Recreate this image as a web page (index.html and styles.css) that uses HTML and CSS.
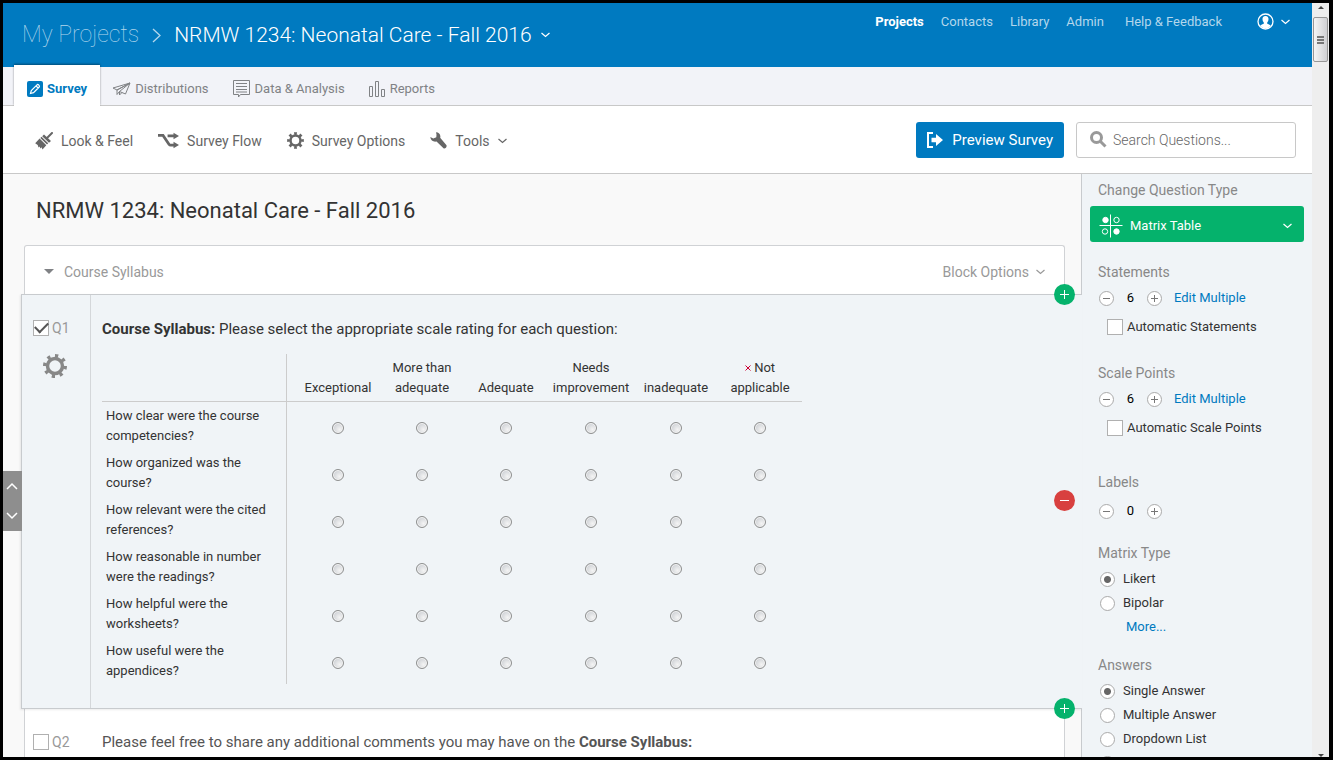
FILE: index.html
```html
<!DOCTYPE html>
<html lang="en">
<head>
    <meta charset="UTF-8">
    <title>NRMW 1234: Neonatal Care - Fall 2016</title>
    <link rel="stylesheet" href="styles.css">
</head>
<body>
    <div class="page">
        <header class="header">
            <div class="breadcrumb">
                <a href="#" class="crumb-root">My Projects</a>
                <svg class="crumb-arrow" width="9" height="15" viewBox="0 0 9 15"><path d="M1 1l7 6.500-7 6.500"/></svg>
                <button class="crumb-current">NRMW 1234: Neonatal Care - Fall 2016
                    <svg class="chevron" width="9" height="6" viewBox="0 0 9 6"><path d="M.5 1l4 3.500 4-3.500"/></svg>
                </button>
            </div>
            <nav class="main-nav">
                <a href="#" class="active">Projects</a>
                <a href="#">Contacts</a>
                <a href="#">Library</a>
                <a href="#">Admin</a>
                <a href="#" class="help">Help &amp; Feedback</a>
                <button class="account" aria-label="Account">
                    <svg width="17" height="17" viewBox="0 0 17 17">
                        <circle cx="8.500" cy="8.500" r="7.500" fill="none" stroke="#fff" stroke-width="1.300"/>
                        <path d="M8.500 3C6.300 3 5.400 4.500 5.500 6.300c.1 1.500.6 2.500 1.300 3.200v1.300c-1 .5-2.600.8-3.600 1.900A7.300 7.300 0 0 0 8.500 15.500a7.300 7.300 0 0 0 5.300-2.800c-1-1.100-2.600-1.400-3.600-1.900V9.500c.7-.7 1.200-1.700 1.300-3.200C11.600 4.500 10.700 3 8.500 3z" fill="#fff"/>
                    </svg>
                    <svg class="chevron" width="9" height="6" viewBox="0 0 9 6"><path d="M.5 1l4 3.500 4-3.500"/></svg>
                </button>
            </nav>
        </header>

        <nav class="tabs">
            <a href="#" class="tab active">
                <svg width="16" height="16" viewBox="0 0 16 16">
                    <rect width="16" height="16" rx="2" fill="#007ac0"/>
                    <path d="M3.500 12.500l.8-3 5.700-5.700c1-1 3.200 1.200 2.200 2.200l-5.700 5.700zM9 4.800L11.200 7" fill="none" stroke="#fff" stroke-width="1.200"/>
                </svg>
                Survey
            </a>
            <a href="#" class="tab">
                <svg width="19" height="16" viewBox="0 0 19 16" class="line-icon"><path d="M18 2L1 7l4 2zM18 2L5 9v4.500l2.500-3M18 2l-4.500 11-6-2.500zM7.500 10.500V14l2.500-2.500"/></svg>
                Distributions
            </a>
            <a href="#" class="tab">
                <svg width="18" height="18" viewBox="0 0 18 18" class="line-icon"><path d="M.5.5h16v14h-9L5.500 17v-2.500h-5zM3 3.500h11M3 6.500h11M3 9.500h11M3 12h11"/></svg>
                Data &amp; Analysis
            </a>
            <a href="#" class="tab">
                <svg width="17" height="16" viewBox="0 0 17 16" class="line-icon"><path d="M.5 5.500h3v10h-3zM6.500.5h3v15h-3zM12.500 8.500h3v7h-3z"/></svg>
                Reports
            </a>
        </nav>

        <div class="toolbar">
            <button class="tool">
                <svg width="18" height="18" viewBox="0 0 18 18">
                    <path d="M17 1L12.500 5.500" stroke="#666" stroke-width="2" stroke-linecap="round"/>
                    <path d="M9 2.500l7 6.500-2 1.800-6.800-6.500zM6.500 4.800l6.700 6.500-1.200 1.200L5.300 6zM4.600 6.600l6.700 6.600L7.500 17.500l-1-2.300-1 1.200-1-2-1 1-.8-2.300L.2 11.200z" fill="#666"/>
                </svg>
                Look &amp; Feel
            </button>
            <button class="tool">
                <svg width="21" height="17" viewBox="0 0 23 17">
                    <path d="M0 3h5.500l6.500 9.500c.5.700 1 1 2 1h4M10.500 3.500H18" fill="none" stroke="#666" stroke-width="3"/>
                    <path d="M17 0l6 3.500L17 7zM17 10l6 3.500-6 3.500z" fill="#666"/>
                </svg>
                Survey Flow
            </button>
            <button class="tool">
                <svg class="gear" width="17" height="17" viewBox="0 0 24 24">
                    <circle cx="12" cy="12" r="7" stroke-width="3.500"/>
                    <circle cx="12" cy="12" r="9.800" stroke-width="4" pathLength="16" stroke-dasharray="1 1" stroke-dashoffset=".5"/>
                </svg>
                Survey Options
            </button>
            <button class="tool">
                <svg width="17" height="17" viewBox="0 0 17 17"><path d="M6 .3c3 0 5 2.500 4.200 5.500l6.300 7.400c.6 1.800-1.300 3.800-3 3L6.500 9.500C3.500 10.200.6 8.300.3 5l3 1.500 3-1.300L6.500 2.600z" fill="#666"/></svg>
                Tools
                <svg class="chevron" width="9" height="6" viewBox="0 0 9 6"><path d="M.5 1l4 3.500 4-3.500"/></svg>
            </button>

            <button class="preview-btn">
                <svg width="17" height="16" viewBox="0 0 17 16"><path d="M6 1H1v14h5" fill="none" stroke="#fff" stroke-width="2"/><path d="M4.500 5.800H9V2l7 6-7 6v-3.800H4.500z" fill="#fff"/></svg>
                Preview Survey
            </button>
            <label class="search">
                <svg width="17" height="17" viewBox="0 0 17 17"><circle cx="6.500" cy="6.500" r="5" fill="none" stroke="#999" stroke-width="3"/><path d="M10.500 10.500l5 5" stroke="#999" stroke-width="3"/></svg>
                <input type="text" placeholder="Search Questions..." aria-label="Search Questions">
            </label>
        </div>

        <div class="content">
            <main class="editor">
                <div class="block-top">
                    <h1>NRMW 1234: Neonatal Care - Fall 2016</h1>
                    <div class="block-header">
                        <button class="block-name"><span class="caret"></span>Course Syllabus</button>
                        <button class="block-options">Block Options
                            <svg class="chevron" width="9" height="6" viewBox="0 0 9 6"><path d="M.5 1l4 3.500 4-3.500"/></svg>
                        </button>
                    </div>
                </div>

                <section class="question">
                    <div class="question-side">
                        <label class="question-id"><input type="checkbox" class="check" checked>Q1</label>
                        <button class="question-gear" aria-label="Question options">
                            <svg class="gear" width="24" height="24" viewBox="0 0 24 24">
                                <circle cx="12" cy="12" r="7.500" stroke-width="3.500"/>
                                <circle cx="12" cy="12" r="10" stroke-width="4" pathLength="16" stroke-dasharray=".8 1.200"/>
                            </svg>
                        </button>
                    </div>
                    <div class="question-body">
                        <p class="question-text"><b>Course Syllabus:</b> Please select the appropriate scale rating for each question:</p>
                        <table class="matrix">
                            <colgroup>
                                <col class="col-statement">
                                <col class="col-first">
                                <col span="2">
                                <col class="col-wide">
                                <col span="2">
                            </colgroup>
                            <thead>
                                <tr>
                                    <td></td>
                                    <th>Exceptional</th>
                                    <th>More than adequate</th>
                                    <th>Adequate</th>
                                    <th>Needs improvement</th>
                                    <th>inadequate</th>
                                    <th><svg class="exclusive" width="6" height="8" viewBox="0 0 6 8"><path d="M.5 1.500l5 5M5.500 1.500l-5 5"/></svg> Not applicable</th>
                                </tr>
                            </thead>
                            <tbody>
                                <tr>
                                    <th>How clear were the course competencies?</th>
                                    <td><input type="radio" name="s1" aria-label="Exceptional"></td>
                                    <td><input type="radio" name="s1" aria-label="More than adequate"></td>
                                    <td><input type="radio" name="s1" aria-label="Adequate"></td>
                                    <td><input type="radio" name="s1" aria-label="Needs improvement"></td>
                                    <td><input type="radio" name="s1" aria-label="inadequate"></td>
                                    <td><input type="radio" name="s1" aria-label="Not applicable"></td>
                                </tr>
                                <tr>
                                    <th>How organized was the course?</th>
                                    <td><input type="radio" name="s2" aria-label="Exceptional"></td>
                                    <td><input type="radio" name="s2" aria-label="More than adequate"></td>
                                    <td><input type="radio" name="s2" aria-label="Adequate"></td>
                                    <td><input type="radio" name="s2" aria-label="Needs improvement"></td>
                                    <td><input type="radio" name="s2" aria-label="inadequate"></td>
                                    <td><input type="radio" name="s2" aria-label="Not applicable"></td>
                                </tr>
                                <tr>
                                    <th>How relevant were the cited references?</th>
                                    <td><input type="radio" name="s3" aria-label="Exceptional"></td>
                                    <td><input type="radio" name="s3" aria-label="More than adequate"></td>
                                    <td><input type="radio" name="s3" aria-label="Adequate"></td>
                                    <td><input type="radio" name="s3" aria-label="Needs improvement"></td>
                                    <td><input type="radio" name="s3" aria-label="inadequate"></td>
                                    <td><input type="radio" name="s3" aria-label="Not applicable"></td>
                                </tr>
                                <tr>
                                    <th>How reasonable in number were the readings?</th>
                                    <td><input type="radio" name="s4" aria-label="Exceptional"></td>
                                    <td><input type="radio" name="s4" aria-label="More than adequate"></td>
                                    <td><input type="radio" name="s4" aria-label="Adequate"></td>
                                    <td><input type="radio" name="s4" aria-label="Needs improvement"></td>
                                    <td><input type="radio" name="s4" aria-label="inadequate"></td>
                                    <td><input type="radio" name="s4" aria-label="Not applicable"></td>
                                </tr>
                                <tr>
                                    <th>How helpful were the worksheets?</th>
                                    <td><input type="radio" name="s5" aria-label="Exceptional"></td>
                                    <td><input type="radio" name="s5" aria-label="More than adequate"></td>
                                    <td><input type="radio" name="s5" aria-label="Adequate"></td>
                                    <td><input type="radio" name="s5" aria-label="Needs improvement"></td>
                                    <td><input type="radio" name="s5" aria-label="inadequate"></td>
                                    <td><input type="radio" name="s5" aria-label="Not applicable"></td>
                                </tr>
                                <tr>
                                    <th>How useful were the appendices?</th>
                                    <td><input type="radio" name="s6" aria-label="Exceptional"></td>
                                    <td><input type="radio" name="s6" aria-label="More than adequate"></td>
                                    <td><input type="radio" name="s6" aria-label="Adequate"></td>
                                    <td><input type="radio" name="s6" aria-label="Needs improvement"></td>
                                    <td><input type="radio" name="s6" aria-label="inadequate"></td>
                                    <td><input type="radio" name="s6" aria-label="Not applicable"></td>
                                </tr>
                            </tbody>
                        </table>
                    </div>
                    <button class="round-btn add-above" aria-label="Add question above"><svg width="11" height="11" viewBox="0 0 11 11"><path d="M5.500 1v9M1 5.500h9"/></svg></button>
                    <button class="round-btn remove" aria-label="Remove question"><svg width="11" height="11" viewBox="0 0 11 11"><path d="M1 5.500h9"/></svg></button>
                    <button class="round-btn add-below" aria-label="Add question below"><svg width="11" height="11" viewBox="0 0 11 11"><path d="M5.500 1v9M1 5.500h9"/></svg></button>
                </section>

                <div class="block-rest">
                    <section class="question-next">
                        <label class="question-id"><input type="checkbox" class="check">Q2</label>
                        <p class="question-text">Please feel free to share any additional comments you may have on the <b>Course Syllabus:</b></p>
                    </section>
                </div>

                <div class="jump">
                    <button aria-label="Previous"><svg width="12" height="8" viewBox="0 0 12 8"><path d="M1 7l5-5 5 5"/></svg></button>
                    <button aria-label="Next"><svg width="12" height="8" viewBox="0 0 12 8"><path d="M1 1l5 5 5-5"/></svg></button>
                </div>
            </main>

            <aside class="panel">
                <div class="group">
                    <h2>Change Question Type</h2>
                    <button class="type-btn">
                        <svg width="24" height="24" viewBox="0 0 24 24" fill="none" stroke="#fff">
                            <path d="M11.500.5v23M.5 11.500h23"/>
                            <circle cx="6.500" cy="6" r="2.700" fill="#fff"/>
                            <circle cx="17.500" cy="6" r="2.700"/>
                            <circle cx="6" cy="17.500" r="2.700"/>
                            <circle cx="17.500" cy="17.500" r="2.700" fill="#fff"/>
                        </svg>
                        Matrix Table
                        <svg class="chevron" width="9" height="6" viewBox="0 0 9 6"><path d="M.5 1l4 3.500 4-3.500"/></svg>
                    </button>
                </div>

                <div class="group">
                    <h2>Statements</h2>
                    <div class="counter">
                        <button aria-label="Fewer statements"><svg width="9" height="9" viewBox="0 0 9 9"><path d="M1 4.500h7"/></svg></button>
                        <span>6</span>
                        <button aria-label="More statements"><svg width="9" height="9" viewBox="0 0 9 9"><path d="M1 4.500h7M4.500 1v7"/></svg></button>
                        <a href="#">Edit Multiple</a>
                    </div>
                    <label class="auto"><input type="checkbox" class="check">Automatic Statements</label>
                </div>

                <div class="group spaced">
                    <h2>Scale Points</h2>
                    <div class="counter">
                        <button aria-label="Fewer scale points"><svg width="9" height="9" viewBox="0 0 9 9"><path d="M1 4.500h7"/></svg></button>
                        <span>6</span>
                        <button aria-label="More scale points"><svg width="9" height="9" viewBox="0 0 9 9"><path d="M1 4.500h7M4.500 1v7"/></svg></button>
                        <a href="#">Edit Multiple</a>
                    </div>
                    <label class="auto"><input type="checkbox" class="check">Automatic Scale Points</label>
                </div>

                <div class="group labels">
                    <h2>Labels</h2>
                    <div class="counter">
                        <button aria-label="Fewer labels"><svg width="9" height="9" viewBox="0 0 9 9"><path d="M1 4.500h7"/></svg></button>
                        <span>0</span>
                        <button aria-label="More labels"><svg width="9" height="9" viewBox="0 0 9 9"><path d="M1 4.500h7M4.500 1v7"/></svg></button>
                    </div>
                </div>

                <div class="group">
                    <h2>Matrix Type</h2>
                    <label class="option"><input type="radio" name="matrix-type" checked>Likert</label>
                    <label class="option"><input type="radio" name="matrix-type">Bipolar</label>
                    <a href="#" class="more">More...</a>
                </div>

                <div class="group tight">
                    <h2>Answers</h2>
                    <label class="option"><input type="radio" name="answers" checked>Single Answer</label>
                    <label class="option"><input type="radio" name="answers">Multiple Answer</label>
                    <label class="option"><input type="radio" name="answers">Dropdown List</label>
                    <label class="option"><input type="radio" name="answers"></label>
                </div>
            </aside>
        </div>
    </div>

    <div class="scrollbar">
        <span class="arrow-up"></span>
        <div class="thumb"><i></i><i></i><i></i></div>
        <span class="arrow-down"></span>
    </div>
</body>
</html>
```
FILE: styles.css
```css
* {
    box-sizing: border-box;
}

body {
    margin: 0;
    height: 100vh;
    padding: 3px 4px 3px 3px;
    background: #000;
    display: flex;
    overflow: hidden;
    font-family: Roboto, "Liberation Sans", sans-serif;
    font-size: 13px;
    line-height: 20px;
    color: #333;
}

h1, h2, p {
    margin: 0;
    font-weight: 400;
}

a {
    color: #007ac0;
    text-decoration: none;
}

button {
    border: none;
    background: none;
    padding: 0;
    font: inherit;
    color: inherit;
    cursor: pointer;
    display: flex;
    align-items: center;
}

svg {
    flex-shrink: 0;
}

.chevron {
    fill: none;
    stroke: currentColor;
    stroke-width: 1.2;
}

.page {
    flex: 1;
    min-width: 0;
    display: flex;
    flex-direction: column;
    background: #fff;
}

/* Header */
.header {
    height: 64px;
    flex-shrink: 0;
    padding: 0 22px 0 19px;
    background: #007ac0;
    display: flex;
    justify-content: space-between;
}

.breadcrumb {
    display: flex;
    align-items: center;
    gap: 13px;
    font-size: 21px;
    font-weight: 300;
    color: #fff;
}

.crumb-root {
    color: #b3d7ec;
    font-size: 23px;
    font-weight: 100;
}

.crumb-arrow {
    fill: none;
    stroke: #b3d7ec;
    stroke-width: 1.3;
}

.crumb-current {
    gap: 9px;
}

.main-nav {
    height: 37px;
    display: flex;
    align-items: center;
    gap: 17px;
}

.main-nav a {
    color: #b3d7ec;
}

.main-nav a.active {
    color: #fff;
    font-weight: 700;
}

.main-nav .help {
    margin-left: 4px;
}

.account {
    gap: 7px;
    margin-left: 18px;
    color: #fff;
}

/* Tabs */
.tabs {
    height: 39px;
    flex-shrink: 0;
    padding: 0 11px;
    background: #f2f3f8;
    border-bottom: 1px solid #c8c8c8;
    display: flex;
}

.tab {
    height: 38px;
    padding: 6px 12px 0;
    display: flex;
    align-items: center;
    gap: 4px;
    color: #808285;
}

.tab.active {
    height: 41px;
    margin-top: -2px;
    padding: 6px 13px 0;
    background: #fff;
    color: #007ac0;
    font-weight: 700;
    box-shadow: 0 -1px 2px rgba(0, 0, 0, 0.4);
    clip-path: inset(-3px -2px 0 -2px);
}

.line-icon {
    fill: none;
    stroke: #808285;
}

/* Toolbar */
.toolbar {
    height: 68px;
    flex-shrink: 0;
    padding: 0 16px 0 32px;
    border-bottom: 1px solid #c8c8c8;
    display: flex;
    align-items: center;
    gap: 25px;
    font-size: 14px;
    color: #666;
}

.tool {
    padding-top: 2px;
    gap: 8px;
}

.gear {
    fill: none;
    stroke: #666;
}

.preview-btn {
    height: 36px;
    margin-left: auto;
    margin-right: -13px;
    padding: 0 11px;
    gap: 8px;
    border-radius: 3px;
    background: #007ac0;
    color: #fff;
    font-size: 15px;
}

.search {
    width: 220px;
    height: 36px;
    padding: 0 13px;
    border: 1px solid #c8c8c8;
    border-radius: 3px;
    display: flex;
    align-items: center;
    gap: 6px;
}

.search input {
    width: 100%;
    border: none;
    padding: 0;
    outline: none;
    background: none;
    font: inherit;
    font-weight: 300;
}

.search input::placeholder {
    color: #666;
}

/* Survey editor */
.content {
    flex: 1;
    min-height: 0;
    display: flex;
    overflow: hidden;
}

.editor {
    position: relative;
    flex: 1;
    min-width: 0;
    display: flex;
    flex-direction: column;
    background: #f9f9f9;
}

.block-top {
    padding: 21px 16px 0 21px;
    border-right: 1px solid #c8cbce;
}

h1 {
    padding-left: 12px;
    font-size: 22px;
    line-height: 32px;
    margin-bottom: 18px;
}

.block-header {
    height: 49px;
    padding: 3px 19px 0;
    border: 1px solid #d0d2d5;
    border-bottom: none;
    border-radius: 3px 3px 0 0;
    background: #fff;
    display: flex;
    justify-content: space-between;
    align-items: center;
    color: #999;
    font-size: 14px;
}

.caret {
    border: 5px solid transparent;
    border-top-color: #808285;
    border-bottom: none;
    margin-right: 10px;
}

.block-options {
    gap: 7px;
}

.question {
    position: relative;
    margin-left: 18px;
    height: 415px;
    flex-shrink: 0;
    display: flex;
    border: 1px solid #c8cbce;
    border-right: none;
    background: #f0f4f7;
    box-shadow: -1px 1px 2px rgba(0, 0, 0, 0.08);
}

.question-side {
    width: 69px;
    padding: 23px 0 0 11px;
    border-right: 1px solid #d4d7da;
}

.question-id {
    display: flex;
    align-items: center;
    gap: 3px;
    color: #999;
    font-size: 14px;
}

.check {
    appearance: none;
    width: 16px;
    height: 16px;
    margin: 0;
    border: 1px solid #b0b0b0;
    background: #fff;
    flex-shrink: 0;
    display: flex;
    align-items: center;
    justify-content: center;
}

.check:checked::before {
    content: "";
    width: 11px;
    height: 6px;
    margin-bottom: 4px;
    border: solid #555;
    border-width: 0 0 2px 2px;
    transform: rotate(-45deg);
}

.question-gear {
    margin: 16px 0 0 10px;
}

.question-gear .gear {
    stroke: #888;
}

.question-body {
    padding: 24px 0 0 11px;
}

.question-text {
    font-size: 15px;
}

.matrix {
    width: 700px;
    margin-top: 15px;
    border-spacing: 0;
    table-layout: fixed;
}

.matrix col {
    width: 84px;
}

.matrix .col-statement {
    width: 185px;
}

.matrix .col-first {
    width: 93px;
}

.matrix .col-wide {
    width: 86px;
}

.matrix th,
.matrix td {
    height: 47px;
    padding: 0;
    font-weight: 400;
    text-align: center;
    vertical-align: middle;
}

.matrix thead th,
.matrix thead td {
    height: 48px;
    padding-bottom: 3px;
    vertical-align: bottom;
    border-bottom: 1px solid #ccc;
}

.matrix tr > :first-child {
    border-right: 1px solid #ccc;
}

.matrix tbody th {
    padding: 0 12px 0 4px;
    text-align: left;
}

.matrix tr > :nth-child(2) {
    padding-left: 9px;
}

.matrix input {
    appearance: none;
    width: 12px;
    height: 12px;
    margin: 4px 0 0;
    border: 1px solid #8e8f8f;
    border-radius: 50%;
    background: radial-gradient(circle at 65% 65%, #f4f4f4, #c0c4ca);
    box-shadow: inset 0 0 0 1px #f4f4f4;
    vertical-align: middle;
}

.exclusive {
    stroke: #c03;
}

.round-btn {
    position: absolute;
    right: 7px;
    width: 21px;
    height: 21px;
    border-radius: 50%;
    justify-content: center;
    background: #05b26c;
}

.round-btn path {
    stroke: #fff;
}

.add-above {
    top: -11px;
}

.add-below {
    bottom: -11px;
}

.remove {
    top: 195px;
    background: #d8403f;
}

.block-rest {
    flex: 1;
    padding: 0 16px 0 21px;
    border-right: 1px solid #c8cbce;
}

.question-next {
    height: 100%;
    padding: 23px 8px 0;
    border: solid #d0d2d5;
    border-width: 0 1px;
    background: #fff;
    display: flex;
    align-items: flex-start;
    color: #555;
}

.question-next .question-id {
    width: 69px;
}

/* Jump control over the left edge */
.jump {
    position: absolute;
    top: 297px;
    left: 0;
    width: 19px;
    height: 60px;
    background: #8e8e8e;
}

.jump button {
    width: 100%;
    height: 30px;
    padding-right: 1px;
    justify-content: center;
}

.jump path {
    fill: none;
    stroke: #fff;
    stroke-width: 1.5;
}

/* Question type panel */
.panel {
    width: 230px;
    padding: 6px 8px 0;
    background: #f0f4f7;
}

.group {
    margin-bottom: 20px;
}

.group.spaced {
    margin: 24px 0 32px;
}

.group.tight {
    margin-top: -4px;
}

h2 {
    padding-left: 8px;
    margin-bottom: 4px;
    font-size: 14px;
    line-height: 20px;
    color: #888;
}

.type-btn {
    width: 100%;
    height: 36px;
    margin-top: 6px;
    padding: 3px 12px 0 9px;
    gap: 7px;
    border-radius: 3px;
    background: #05b26c;
    color: #fff;
}

.type-btn .chevron {
    margin-left: auto;
}

.counter {
    height: 24px;
    padding-left: 9px;
    display: flex;
    align-items: center;
    color: #000;
}

.labels .counter {
    margin-top: 7px;
}

.counter button {
    width: 15px;
    height: 15px;
    border: 1px solid #aaa;
    border-radius: 50%;
    background: #fff;
    justify-content: center;
}

.counter path {
    stroke: #777;
}

.counter span {
    width: 33px;
    text-align: center;
}

.counter a {
    margin-left: 12px;
}

.auto {
    height: 24px;
    margin-top: 5px;
    padding-left: 17px;
    display: flex;
    align-items: center;
    gap: 4px;
}

.option {
    height: 24px;
    padding-left: 10px;
    display: flex;
    align-items: center;
    gap: 8px;
}

.option input {
    appearance: none;
    width: 15px;
    height: 15px;
    margin: 0;
    border: 1px solid #aaa;
    border-radius: 50%;
    background: #fff;
}

.option input:checked {
    background: radial-gradient(circle, #666 3px, #fff 4px);
}

.more {
    display: block;
    padding-left: 36px;
    line-height: 24px;
}

/* Window scrollbar */
.scrollbar {
    width: 17px;
    padding: 3px 1px 0;
    background: #eee;
    display: flex;
    flex-direction: column;
    align-items: center;
}

.arrow-up,
.arrow-down {
    border: 3px solid transparent;
}

.arrow-up {
    border-top: none;
    border-bottom-color: #444;
}

.arrow-down {
    margin-top: auto;
    border-bottom: none;
    border-top-color: #444;
}

.thumb {
    width: 15px;
    height: 45px;
    margin-top: 8px;
    border: 1px solid #979797;
    border-radius: 2px;
    background: linear-gradient(90deg, #f5f5f5, #d0d0d3);
    display: flex;
    flex-direction: column;
    align-items: center;
    justify-content: center;
    gap: 1px;
}

.thumb i {
    width: 7px;
    height: 2px;
    background: #777;
}
```
